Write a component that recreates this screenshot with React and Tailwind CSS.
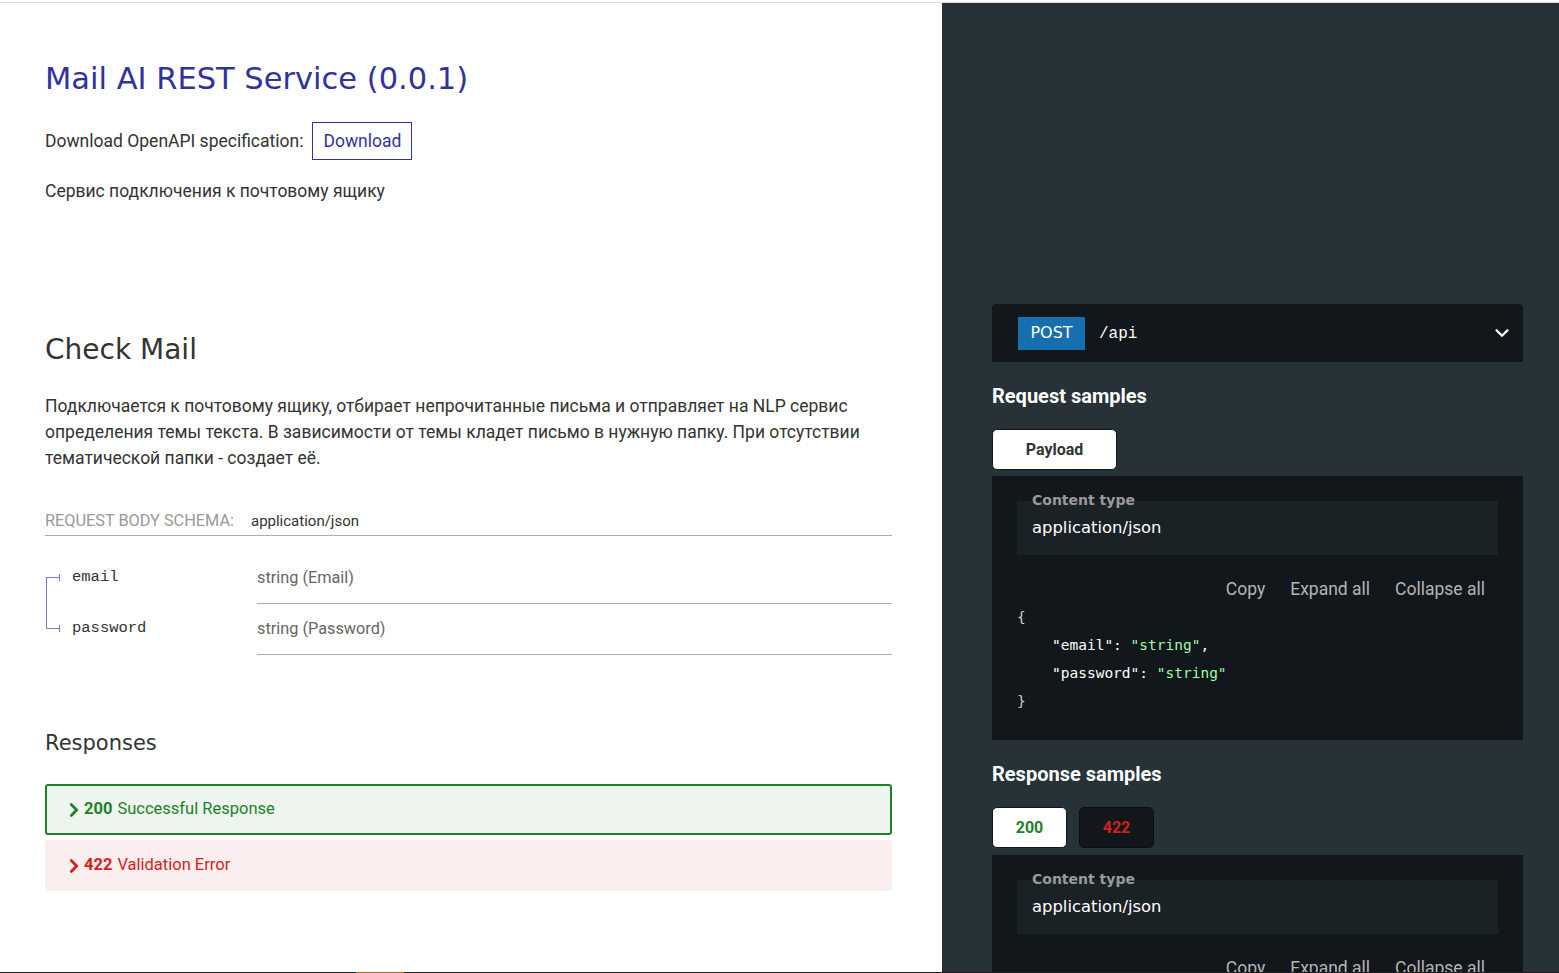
// App.jsx — API reference page (two-panel docs layout)
import { ChevronRight, ChevronDown } from 'lucide-react';

const heading = { fontFamily: '"DejaVu Sans", "Open Sans", sans-serif' };
const body = { fontFamily: 'Roboto, "Liberation Sans", sans-serif' };
const courier = { fontFamily: '"Liberation Mono", "Courier New", monospace' };
const codeFont = { fontFamily: '"DejaVu Sans Mono", "Liberation Mono", monospace' };

const fields = [
  { name: 'email', type: 'string (Email)', first: true },
  { name: 'password', type: 'string (Password)', last: true },
];

const FieldRow = ({ name, type, first }) => (
  <div className="flex">
    <div className="relative w-[212px] shrink-0 pt-[11px]">
      {/* tree lines */}
      <span
        className={`absolute left-[1px] w-px bg-[#7c7cbb] ${first ? 'top-[24px] bottom-0' : 'top-0 h-[24px]'}`}
      />
      <span className="absolute left-[1px] top-[24px] h-px w-[14px] bg-[#7c7cbb]" />
      <span className="absolute left-[14px] top-[21px] h-[7px] w-px bg-[#7c7cbb]" />
      <span className="block pl-[27px] text-[15.5px] leading-[26px] text-[#333]" style={courier}>
        {name}
      </span>
    </div>
    <div className="flex-1 border-b border-[#9fb4be] pt-[12px] pb-[12px]">
      <span className="text-[16.3px] leading-[26px] text-[#666]">{type}</span>
    </div>
  </div>
);

const ResponseRow = ({ code, label, ok }) => (
  <div
    className={`flex h-[51px] items-center rounded-[3px] pl-[16px] text-[16.5px] ${
      ok ? 'border-2 border-[#1d8127] bg-[#eef5ef] text-[#1d8127]' : 'bg-[#fbeeee] pl-[18px] text-[#d41f1c]'
    }`}
  >
    <ChevronRight size={22} strokeWidth={3} />
    <b className="ml-[-1px] font-bold">{code}</b>
    <span className="ml-[5px]">{label}</span>
  </div>
);

const ContentType = () => (
  <div className="mt-[24px] flow-root h-[54px] bg-[#1b2226] px-[15px]">
    <div className="-mt-[10px] text-[14px] font-bold leading-[18px] text-[#9a9a9a]" style={heading}>
      Content type
    </div>
    <div className="mt-[8px] text-[16.4px] leading-[22px] text-white" style={heading}>
      application/json
    </div>
  </div>
);

const SampleActions = () => (
  <div
    className="mt-[22px] flex justify-end gap-[25px] pr-[13px] text-[17.5px] leading-[24px] text-[#b5b5b5]"
    style={body}
  >
    <span>Copy</span>
    <span>Expand all</span>
    <span>Collapse all</span>
  </div>
);

const App = () => {
  return (
    <div className="flex h-[973px] w-[1559px] flex-col overflow-hidden bg-white" style={body}>
      <div className="h-[2px] bg-white" />
      <div className="h-px bg-[#dcdcdc]" />
      <div className="flex min-h-0 flex-1">
        {/* Middle panel */}
        <div className="w-[942px] shrink-0 pl-[45px] pr-[50px] pt-[56px] text-[#333]">
          <h1 className="text-[30.5px] leading-[40px] text-[#32329f]" style={heading}>
            Mail AI REST Service (0.0.1)
          </h1>
          <div className="mt-[23px] flex items-center text-[17.5px]">
            <span>Download OpenAPI specification:</span>
            <span className="ml-[9px] flex h-[38px] items-center border border-[#32329f] px-[10px] text-[#32329f]">
              Download
            </span>
          </div>
          <p className="mt-[18px] text-[17.5px] leading-[26px]">Сервис подключения к почтовому ящику</p>

          <h2 className="mt-[128px] text-[28px] leading-[36px] text-[#333]" style={heading}>
            Check Mail
          </h2>
          <p className="mt-[25px] text-[17.5px] leading-[26px]">
            Подключается к почтовому ящику, отбирает непрочитанные письма и отправляет на NLP сервис
            определения темы текста. В зависимости от темы кладет письмо в нужную папку. При отсутствии
            тематической папки - создает её.
          </p>

          <div className="mt-[37px] flex items-center border-b border-[#9fb4be] pb-[1px] leading-[26px]">
            <span className="text-[16.3px] uppercase text-[#999]">Request Body schema:</span>
            <span className="ml-[17px] text-[15px] text-[#333]">application/json</span>
          </div>
          <div className="mt-[17px]">
            {fields.map((f) => (
              <FieldRow key={f.name} {...f} />
            ))}
          </div>

          <h3 className="mt-[73px] text-[21px] leading-[30px] text-[#333]" style={heading}>
            Responses
          </h3>
          <div className="mt-[26px] flex flex-col gap-[5px]">
            <ResponseRow code="200" label="Successful Response" ok />
            <ResponseRow code="422" label="Validation Error" />
          </div>
        </div>

        {/* Right panel */}
        <div className="flex-1 bg-[#263238] pl-[50px] pr-[36px] pt-[301px]">
          <div className="flex h-[58px] items-center rounded-t-[4px] bg-[#11171a] pl-[26px] pr-[10px]">
            <span
              className="flex h-[33px] w-[67px] items-center justify-center bg-[#186fb0] text-[16px] text-white"
              style={heading}
            >
              POST
            </span>
            <span className="ml-[14px] mt-[2px] text-[16px] text-white" style={courier}>
              /api
            </span>
            <ChevronDown size={22} strokeWidth={2.5} className="ml-auto text-white" />
          </div>

          <h3 className="mt-[20px] text-[20px] font-bold leading-[28px] text-white">Request samples</h3>
          <div className="mt-[19px] flex">
            <span className="flex h-[41px] w-[125px] items-center justify-center rounded-[5px] border border-[#11171a] bg-white text-[16px] font-bold text-[#333]">
              Payload
            </span>
          </div>
          <div className="mt-[6px] h-[264px] bg-[#11171a] px-[25px] pt-px">
            <ContentType />
            <SampleActions />
            <pre className="mt-[2px] text-[14.5px] leading-[28px] text-white" style={codeFont}>
              <div className="text-[#ccc]">{'{'}</div>
              <div className="pl-[35px]">
                "email": <span className="text-[#a0fbaa]">"string"</span>,
              </div>
              <div className="pl-[35px]">
                "password": <span className="text-[#a0fbaa]">"string"</span>
              </div>
              <div className="text-[#ccc]">{'}'}</div>
            </pre>
          </div>

          <h3 className="mt-[20px] text-[20px] font-bold leading-[28px] text-white">Response samples</h3>
          <div className="mt-[19px] flex gap-[12px]">
            <span className="flex h-[41px] w-[75px] items-center justify-center rounded-[5px] border border-[#11171a] bg-white text-[16px] font-bold text-[#1d8127]">
              200
            </span>
            <span className="flex h-[41px] w-[75px] items-center justify-center rounded-[5px] border border-[#0b0f11] bg-[#11171a] text-[16px] font-bold text-[#d41f1c]">
              422
            </span>
          </div>
          <div className="mt-[7px] h-[200px] bg-[#11171a] px-[25px] pt-px">
            <ContentType />
            <SampleActions />
          </div>
        </div>
      </div>
      <div className="flex h-px bg-[#1e1e1e]">
        <span className="ml-[356px] w-[48px] bg-[#b5651d]" />
      </div>
    </div>
  );
};

export default App;
